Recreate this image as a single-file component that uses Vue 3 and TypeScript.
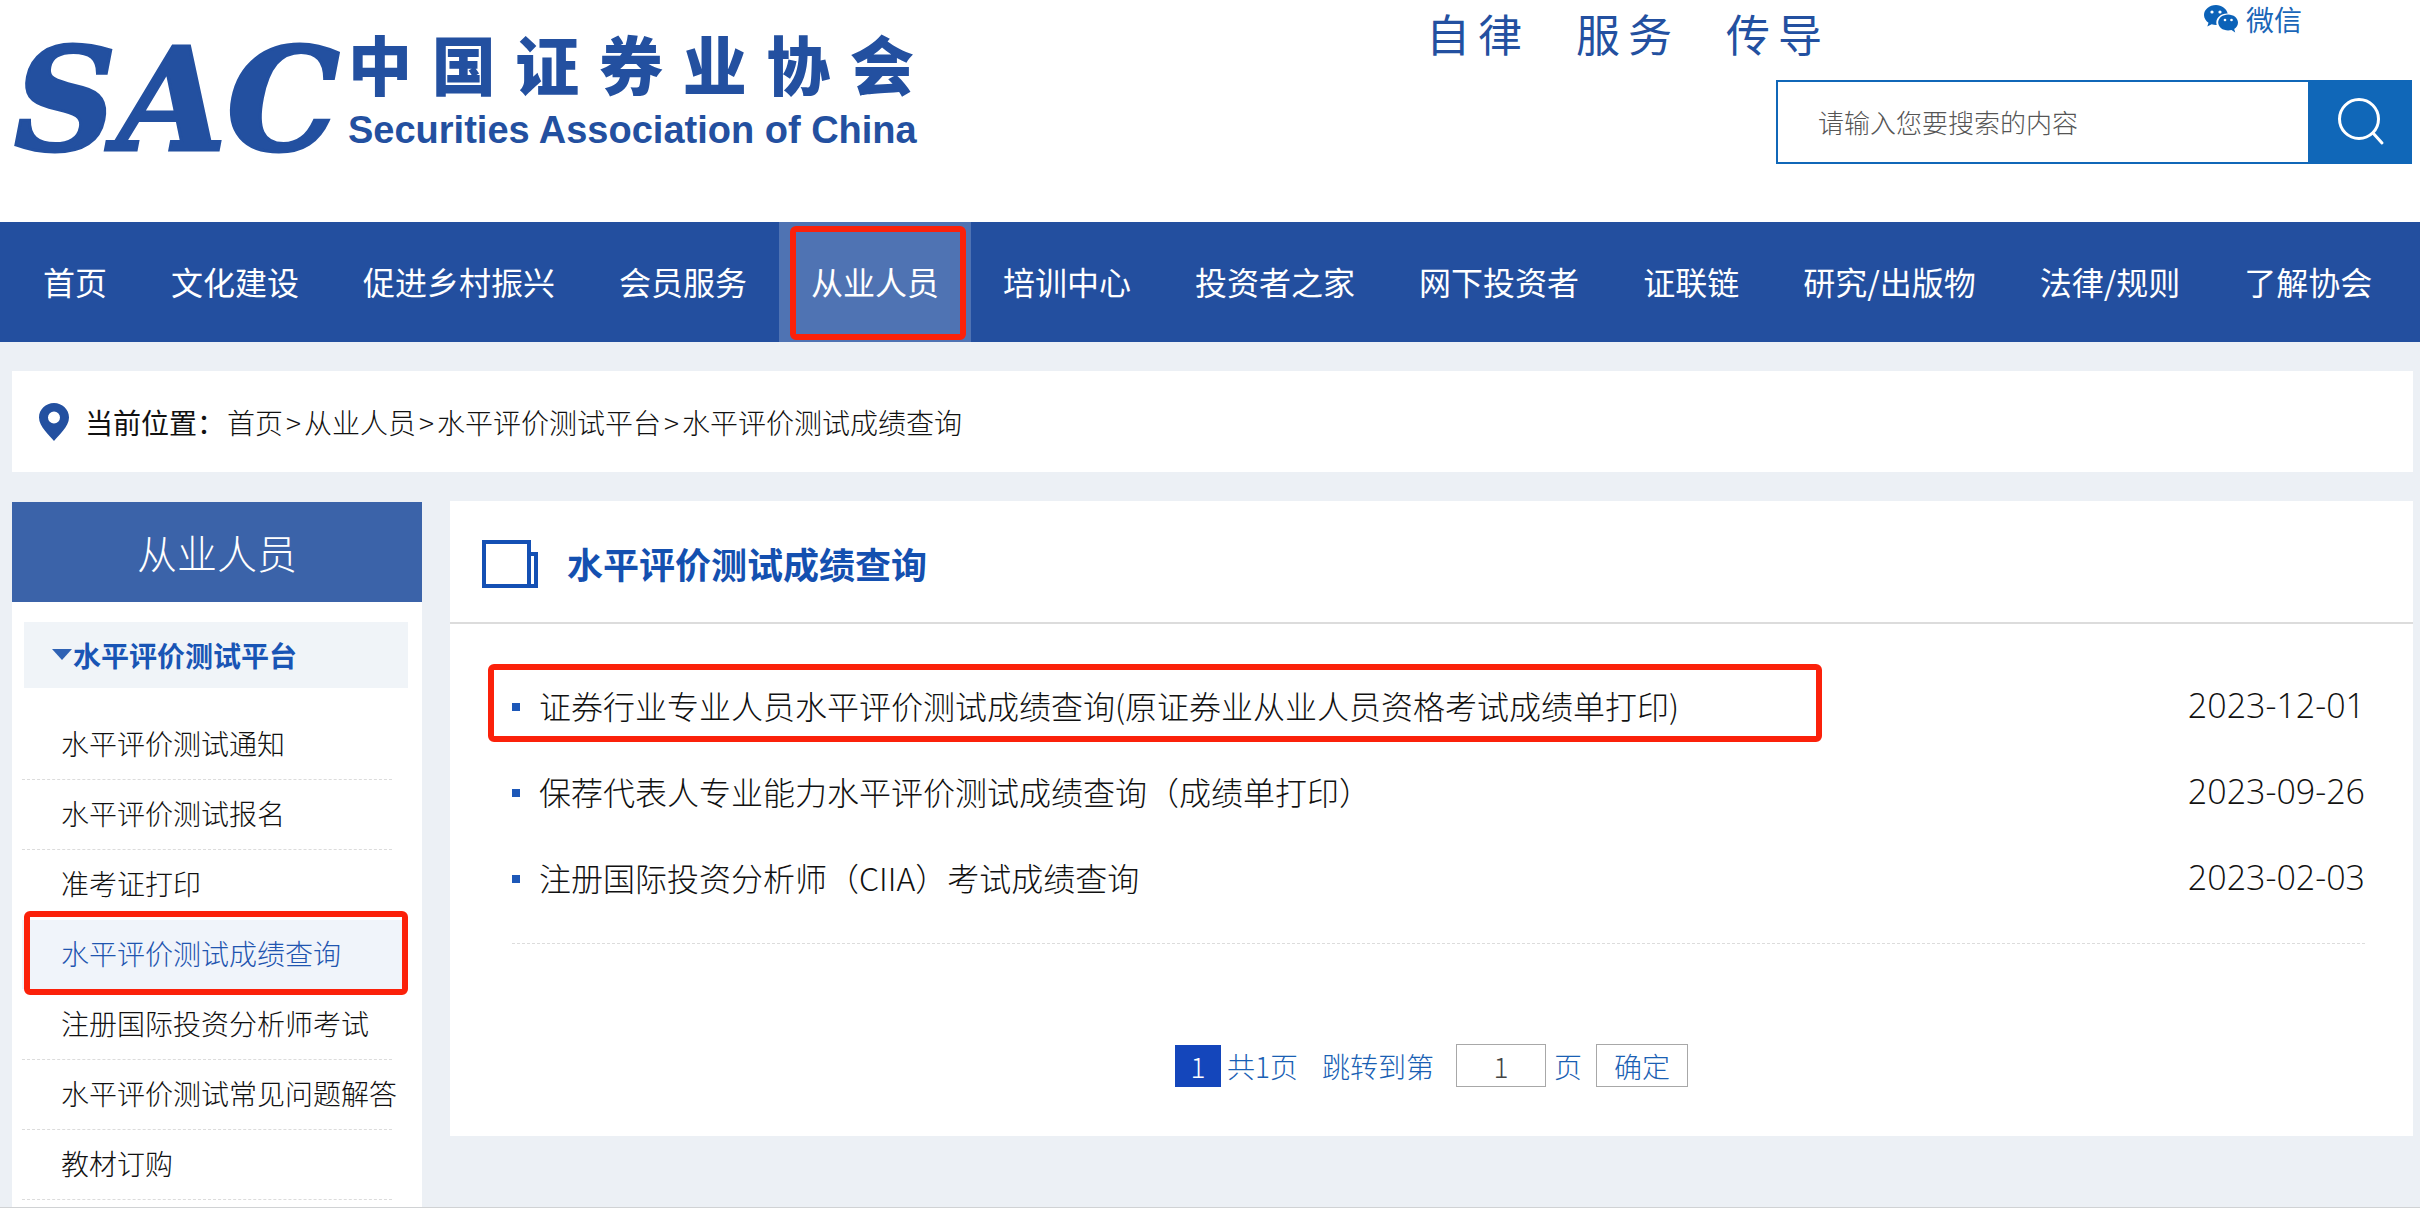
<script setup lang="ts">
import { ref } from 'vue'

interface NavItem {
  label: string
  active?: boolean
}

interface Article {
  title: string
  date: string
  marked?: boolean
}

const navItems: NavItem[] = [
  { label: '首页' },
  { label: '文化建设' },
  { label: '促进乡村振兴' },
  { label: '会员服务' },
  { label: '从业人员', active: true },
  { label: '培训中心' },
  { label: '投资者之家' },
  { label: '网下投资者' },
  { label: '证联链' },
  { label: '研究/出版物' },
  { label: '法律/规则' },
  { label: '了解协会' },
]

const slogans: string[] = ['自律', '服务', '传导']

const crumbs: string[] = ['首页', '从业人员', '水平评价测试平台', '水平评价测试成绩查询']

const sideItems: NavItem[] = [
  { label: '水平评价测试通知' },
  { label: '水平评价测试报名' },
  { label: '准考证打印' },
  { label: '水平评价测试成绩查询', active: true },
  { label: '注册国际投资分析师考试' },
  { label: '水平评价测试常见问题解答' },
  { label: '教材订购' },
]

const articles: Article[] = [
  {
    title: '证券行业专业人员水平评价测试成绩查询(原证券业从业人员资格考试成绩单打印)',
    date: '2023-12-01',
    marked: true,
  },
  { title: '保荐代表人专业能力水平评价测试成绩查询（成绩单打印）', date: '2023-09-26' },
  { title: '注册国际投资分析师（CIIA）考试成绩查询', date: '2023-02-03' },
]

const keyword = ref('')
const targetPage = ref('1')
</script>

<template>
  <div class="page">
    <header class="header">
      <a class="brand" href="#">
        <span class="brand-mark">SAC</span>
        <span class="brand-names">
          <span class="brand-cn">中国证券业协会</span>
          <span class="brand-en">Securities Association of China</span>
        </span>
      </a>

      <div class="slogans">
        <span v-for="word in slogans" :key="word" class="slogan">{{ word }}</span>
      </div>

      <div class="tools">
        <a class="wechat" href="#">
          <svg width="34" height="28" viewBox="0 0 34 28" aria-hidden="true">
            <path
              fill="#0b62b8"
              d="M12 0C5.400 0 0 4.500 0 10c0 3.200 1.800 5.900 4.500 7.700L3.300 21.500l4.400-2.300c1.400.4 2.800.7 4.300.7h.7A8.600 8.600 0 0 1 12.300 17.500c0-5 4.800-9 10.600-9h.8C22.500 3.600 17.700 0 12 0z"
            />
            <path
              fill="#0b62b8"
              d="M34 17.600c0-4.400-4.500-8-9.900-8s-9.900 3.600-9.900 8 4.500 8 9.900 8c1.200 0 2.300-.2 3.400-.5l3.700 2.400-1-3.400c2.300-1.500 3.800-3.900 3.800-6.500z"
            />
            <circle cx="8" cy="7" r="1.600" fill="#fff" />
            <circle cx="16" cy="7" r="1.600" fill="#fff" />
            <circle cx="21" cy="15" r="1.300" fill="#fff" />
            <circle cx="27.500" cy="15" r="1.300" fill="#fff" />
          </svg>
          <span>微信</span>
        </a>
        <form class="search" @submit.prevent>
          <input
            v-model="keyword"
            class="search-input"
            type="text"
            aria-label="搜索"
            placeholder="请输入您要搜索的内容"
          />
          <button class="search-button" type="submit" aria-label="搜索">
            <svg width="52" height="52" viewBox="0 0 52 52" aria-hidden="true">
              <circle cx="25" cy="23" r="19.500" fill="none" stroke="#fff" stroke-width="3" />
              <path d="M39 37l9 10" stroke="#fff" stroke-width="3" stroke-linecap="round" />
            </svg>
          </button>
        </form>
      </div>
    </header>

    <nav class="nav">
      <a
        v-for="item in navItems"
        :key="item.label"
        class="nav-item"
        :class="{ 'nav-item-active': item.active }"
        href="#"
        >{{ item.label }}</a
      >
    </nav>

    <div class="body">
      <div class="breadcrumb">
        <svg class="pin" width="30" height="38" viewBox="0 0 30 38" aria-hidden="true">
          <path
            fill="#2350a0"
            fill-rule="evenodd"
            d="M15 0C6.700 0 0 6.500 0 14.500 0 24 10.500 32 15 38c4.500-6 15-14 15-23.500C30 6.500 23.300 0 15 0zm0 8.500a6 6 0 1 1 0 12 6 6 0 0 1 0-12z"
          />
        </svg>
        <span class="crumb-label">当前位置：</span>
        <template v-for="(crumb, index) in crumbs" :key="crumb">
          <span v-if="index > 0" class="crumb-sep">&gt;</span>
          <a class="crumb" href="#">{{ crumb }}</a>
        </template>
      </div>

      <div class="columns">
        <aside class="sidebar">
          <h2 class="side-title">从业人员</h2>
          <a class="side-group" href="#">
            <svg width="20" height="12" viewBox="0 0 20 12" aria-hidden="true">
              <path d="M0 0h20L10 11z" fill="#2f62b4" />
            </svg>
            <span>水平评价测试平台</span>
          </a>
          <ul class="side-list">
            <li
              v-for="item in sideItems"
              :key="item.label"
              class="side-item"
              :class="{ 'side-item-active': item.active }"
            >
              <a class="side-link" href="#">{{ item.label }}</a>
            </li>
          </ul>
        </aside>

        <main class="panel">
          <div class="panel-head">
            <svg width="56" height="50" viewBox="0 0 56 50" aria-hidden="true">
              <path d="M2 4h45v44H2zM47 16h7v32h-7" fill="none" stroke="#1450b4" stroke-width="4" />
            </svg>
            <h1 class="panel-title">水平评价测试成绩查询</h1>
          </div>

          <ul class="articles">
            <li
              v-for="article in articles"
              :key="article.title"
              class="article"
              :class="{ 'article-marked': article.marked }"
            >
              <a class="article-link" href="#">{{ article.title }}</a>
              <time class="article-date" :datetime="article.date">{{ article.date }}</time>
            </li>
          </ul>

          <form class="pager" @submit.prevent>
            <span class="pager-current">1</span>
            <span class="pager-total">共1页</span>
            <label class="pager-label" for="page-number">跳转到第</label>
            <input id="page-number" v-model="targetPage" class="pager-input" type="text" />
            <span class="pager-unit">页</span>
            <button class="pager-button" type="submit">确定</button>
          </form>
        </main>
      </div>
    </div>
  </div>
</template>

<style>
body {
  margin: 0;
}
</style>

<style scoped>
.page {
  display: flex;
  flex-direction: column;
  box-sizing: border-box;
  min-height: 100vh;
  border-bottom: 1px solid #d0d2d4;
  background: #fff;
  color: #111;
  font-family: 'Noto Sans CJK SC', sans-serif;
  font-size: 28px;
  font-weight: 300;
  line-height: 40px;
}

a {
  color: inherit;
  text-decoration: none;
}

ul {
  margin: 0;
  padding: 0;
  list-style: none;
}

h1,
h2 {
  margin: 0;
}

input,
button {
  box-sizing: border-box;
  margin: 0;
  border-radius: 0;
  font: inherit;
}

/* header */
.header {
  display: flex;
  align-items: flex-start;
  height: 222px;
  padding: 0 8px 0 14px;
  box-sizing: border-box;
}

.brand {
  display: flex;
  flex: none;
  color: #2350a0;
}

.brand-mark {
  width: 334px;
  padding-top: 20px;
  font-family: 'DejaVu Serif', serif;
  font-size: 142px;
  font-style: italic;
  font-weight: 700;
  line-height: 160px;
  -webkit-text-stroke: 3px #2350a0;
}

.brand-names {
  display: flex;
  flex-direction: column;
  width: 566px;
  padding-top: 30px;
}

.brand-cn {
  font-size: 64px;
  font-weight: 900;
  line-height: 64px;
  text-align-last: justify;
}

.brand-en {
  padding-top: 16px;
  font-family: 'Liberation Sans', sans-serif;
  font-size: 38px;
  font-weight: 700;
  white-space: nowrap;
}

.slogans {
  display: flex;
  flex: 1;
  justify-content: flex-end;
  gap: 54px;
  margin-right: 380px;
  color: #2350a0;
  font-size: 44px;
  font-weight: 400;
  line-height: 66px;
}

.slogan {
  width: 96px;
  text-align-last: justify;
}

.tools {
  display: flex;
  flex: none;
  flex-direction: column;
  gap: 42px;
  width: 636px;
  margin-left: -426px;
}

.wechat {
  display: flex;
  align-items: center;
  justify-content: flex-end;
  gap: 8px;
  padding-right: 110px;
  color: #1a66b8;
  font-weight: 400;
  line-height: 38px;
}

.search {
  display: flex;
  height: 84px;
}

.search-input {
  flex: 1;
  min-width: 0;
  padding: 0 40px;
  border: 2px solid #1067b8;
  border-right: 0;
  outline: 0;
  background: #fff;
  color: #333;
  font-size: 26px;
}

.search-input::placeholder {
  color: #555;
  opacity: 1;
}

.search-button {
  display: flex;
  align-items: center;
  justify-content: center;
  width: 104px;
  padding: 0;
  border: 0;
  background: #1067b8;
}

/* main navigation */
.nav {
  display: flex;
  box-sizing: border-box;
  height: 120px;
  padding: 0 11px;
  background: #234f9f;
  color: #fff;
  font-size: 32px;
  font-weight: 400;
  line-height: 118px;
  white-space: nowrap;
}

.nav-item {
  padding: 0 32px;
}

.nav-item-active {
  position: relative;
  background: #4f73b3;
}

.nav-item-active::after,
.side-item-active::after,
.article-marked::after {
  position: absolute;
  border: 6px solid #fb210a;
  border-radius: 6px;
  content: '';
  pointer-events: none;
}

.nav-item-active::after {
  inset: 4px 5px 2px 11px;
}

/* content area */
.body {
  display: flex;
  flex: 1;
  flex-direction: column;
  gap: 29px;
  padding: 29px 7px 0 12px;
  background: #ecf0f5;
}

.breadcrumb {
  display: flex;
  align-items: center;
  height: 101px;
  padding-left: 27px;
  background: #fff;
}

.pin {
  margin-right: 16px;
}

.crumb-label {
  margin-right: 2px;
  font-weight: 400;
}

.crumb-sep {
  padding: 0 3px;
}

.columns {
  display: flex;
  flex: 1;
  align-items: stretch;
  gap: 28px;
}

.sidebar {
  flex: none;
  width: 410px;
  margin-top: 1px;
  background: #fff;
}

.side-title {
  background: #3b63a9;
  color: #fff;
  font-size: 40px;
  font-weight: 300;
  line-height: 100px;
  text-align: center;
}

.side-group {
  display: flex;
  align-items: center;
  gap: 1px;
  height: 66px;
  margin: 20px 14px 22px 12px;
  padding-left: 28px;
  background: #f0f4f8;
  color: #1955b5;
  font-weight: 700;
}

.side-item {
  position: relative;
  margin: 0 30px 0 10px;
  padding: 13px 0 16px 39px;
  border-bottom: 1px dashed #dcdcdc;
  white-space: nowrap;
}

.side-item:has(+ .side-item-active),
.side-item-active {
  border-bottom-color: transparent;
}

.side-item-active {
  margin-right: 14px;
  background: #f0f4fa;
  background-clip: padding-box;
  color: #1f55b0;
}

.side-item-active::after {
  inset: -9px 0 -6px 2px;
}

/* article panel */
.panel {
  flex: 1;
  align-self: flex-start;
  min-width: 0;
  padding-bottom: 49px;
  background: #fff;
}

.panel-head {
  display: flex;
  box-sizing: border-box;
  align-items: center;
  gap: 29px;
  height: 123px;
  padding: 2px 0 0 32px;
  border-bottom: 2px solid #dcdcdc;
}

.panel-title {
  color: #1450b0;
  font-size: 36px;
  font-weight: 700;
}

.articles {
  margin: 0 48px 0 62px;
  padding: 40px 0 21px;
  border-bottom: 1px dashed #dcdcdc;
  font-size: 32px;
}

.article {
  display: flex;
  position: relative;
  align-items: center;
  height: 86px;
}

.article::before {
  width: 8px;
  height: 8px;
  margin-right: 19px;
  background: #1d58b8;
  content: '';
}

.article-link,
.article-date {
  padding-bottom: 4px;
}

.article-link {
  flex: 1;
}

.article-date {
  font-family: 'Open Sans', sans-serif;
  font-size: 34px;
}

.article-marked::after {
  inset: 0 543px 8px -24px;
}

.pager {
  display: flex;
  align-items: center;
  justify-content: center;
  margin-top: 100px;
  color: #1a5fb4;
}

.pager-current {
  width: 46px;
  margin-right: 6px;
  background: #1446bb;
  color: #fff;
  line-height: 42px;
  text-align: center;
}

.pager-total {
  margin-right: 24px;
}

.pager-label {
  margin-right: 22px;
}

.pager-input {
  width: 90px;
  height: 43px;
  padding: 0;
  border: 1px solid #a8a8a8;
  outline: 0;
  background: #fff;
  color: #444;
  text-align: center;
}

.pager-unit {
  margin: 0 14px 0 8px;
}

.pager-button {
  width: 92px;
  height: 43px;
  padding: 0;
  border: 1px solid #a8a8a8;
  background: #fff;
  color: #1a5fb4;
}
</style>
